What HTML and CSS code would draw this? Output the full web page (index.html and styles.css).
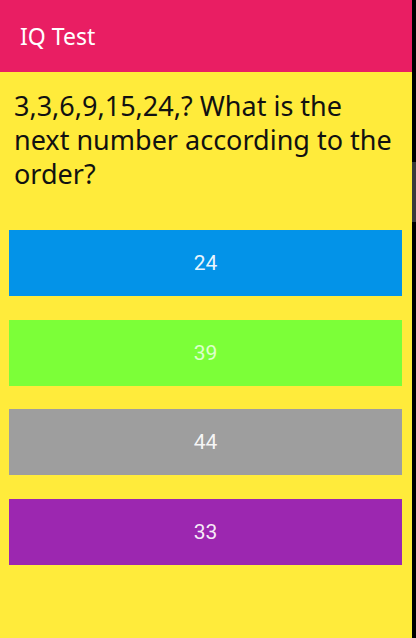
FILE: index.html
```html
<!DOCTYPE html>
<html lang="en">
<head>
    <meta charset="UTF-8">
    <meta name="viewport" content="width=device-width, initial-scale=1.0">
    <title>IQ Test</title>
    <link rel="stylesheet" href="styles.css">
</head>
<body>
<div class="screen">
    <div class="app">
        <div class="toolbar">IQ Test</div>
        <div class="content">
            <p class="question">3,3,6,9,15,24,? What is the next number according to the order?</p>
            <div class="answers">
                <button class="answer blue">24</button>
                <button class="answer green">39</button>
                <button class="answer grey">44</button>
                <button class="answer purple">33</button>
            </div>
        </div>
    </div>
    <div class="edge">
        <div class="thumb"></div>
    </div>
</div>
</body>
</html>
```

FILE: styles.css
```css
body {
    margin: 0;
    padding: 0;
    font-family: "Noto Sans", Roboto, sans-serif;
    background-color: black;
}

.screen {
    display: flex;
    width: 416px;
    height: 638px;
}

.app {
    flex: 1;
    display: flex;
    flex-direction: column;
    background-color: #ffeb3b;
}

.toolbar {
    height: 72px;
    padding-left: 20px;
    display: flex;
    align-items: center;
    background-color: #e91e63;
    color: white;
    font-size: 23px;
}

.content {
    flex: 1;
    padding: 16.5px 10px 0 9px;
}

.question {
    margin: 0 5px 39.5px 5px;
    font-size: 27px;
    line-height: 34px;
    color: #111;
}

.answers {
    display: flex;
    flex-direction: column;
    gap: 23.5px;
}

.answer {
    height: 66px;
    border: none;
    padding: 0;
    font-family: Roboto, "Noto Sans", sans-serif;
    font-size: 21px;
    color: rgba(255, 255, 255, 0.92);
}

.blue {
    background-color: #0393e8;
}

.green {
    background-color: #7cff38;
    color: rgba(255, 255, 255, 0.75);
}

.grey {
    background-color: #9e9e9e;
}

.purple {
    background-color: #9c27b0;
}

.edge {
    width: 4px;
    background-color: black;
    padding-top: 162px;
}

.thumb {
    height: 60px;
    background-color: #3a3a3a;
}
```
